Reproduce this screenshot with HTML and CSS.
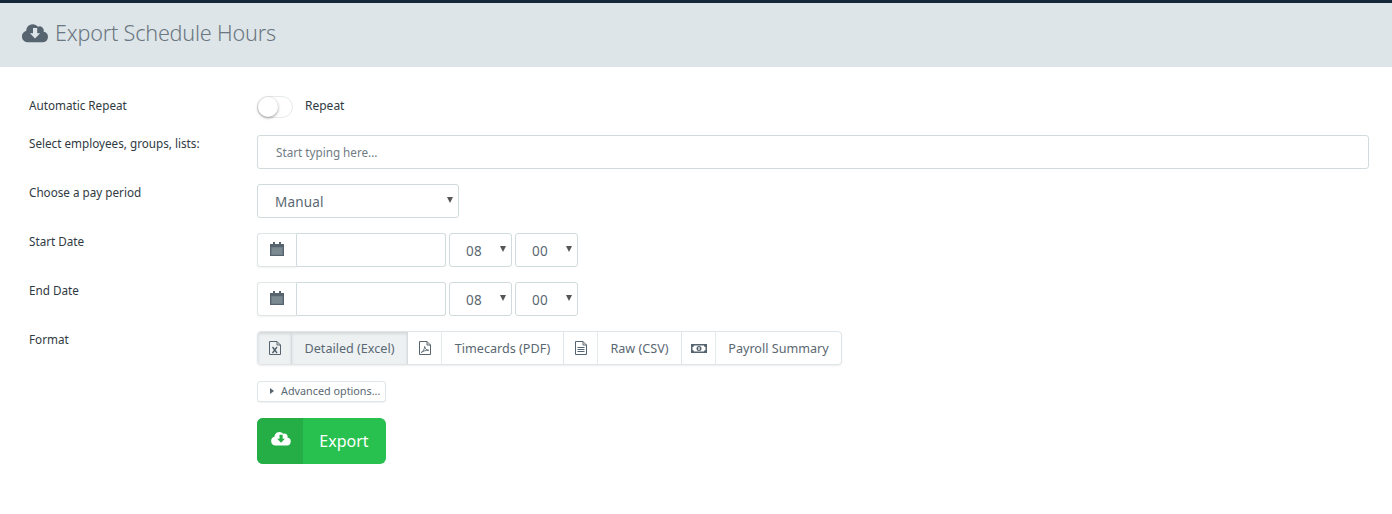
FILE: index.html
```html
<!DOCTYPE html>
<html lang="en">
<head>
<meta charset="utf-8">
<title>Export Schedule Hours</title>
<link rel="stylesheet" href="styles.css">
</head>
<body>
<header class="page-header">
  <svg class="header-icon" viewBox="0 0 26 20" aria-hidden="true"><path fill="#56646f" d="M21.6 8.8A4.2 4.2 0 0 0 16 3.7 6.6 6.6 0 0 0 4.300 7.100v.6A5.900 5.900 0 0 0 6 19.300h15a5.300 5.300 0 0 0 .6-10.500z"/><path fill="#dee5e8" d="M11 5h4.200v5.200h3L13 15.500 7.900 10.200H11z"/></svg>
  <h1 class="page-title">Export Schedule Hours</h1>
</header>
<main class="form">
  <div class="label label-toggle">Automatic Repeat</div>
  <div class="toggle-row"><span class="toggle"><span class="knob"></span></span><span class="toggle-text">Repeat</span></div>

  <label class="label">Select employees, groups, lists:</label>
  <div class="control"><input class="text-input wide" placeholder="Start typing here..."></div>

  <label class="label">Choose a pay period</label>
  <div class="control"><span class="select-wrap period"><select class="select"><option>Manual</option></select></span></div>

  <label class="label">Start Date</label>
  <div class="control date-row">
    <span class="date-group"><span class="addon"><svg class="cal" viewBox="0 0 14 14" aria-hidden="true"><path fill="#56646f" d="M3 0h2v2h4V0h2v2h3v12H0V2h3z"/><path fill="none" stroke="#aeb8be" stroke-width=".5" d="M1 6h12M1 8h12M1 10h12M1 12h12M3 5.500v7M5 5.500v7M7 5.500v7M9 5.500v7M11 5.500v7"/></svg></span><input class="date-input"></span>
    <span class="select-wrap time"><select class="select"><option>08</option></select></span>
    <span class="select-wrap time"><select class="select"><option>00</option></select></span>
  </div>

  <label class="label">End Date</label>
  <div class="control date-row">
    <span class="date-group"><span class="addon"><svg class="cal" viewBox="0 0 14 14" aria-hidden="true"><path fill="#56646f" d="M3 0h2v2h4V0h2v2h3v12H0V2h3z"/><path fill="none" stroke="#aeb8be" stroke-width=".5" d="M1 6h12M1 8h12M1 10h12M1 12h12M3 5.500v7M5 5.500v7M7 5.500v7M9 5.500v7M11 5.500v7"/></svg></span><input class="date-input"></span>
    <span class="select-wrap time"><select class="select"><option>08</option></select></span>
    <span class="select-wrap time"><select class="select"><option>00</option></select></span>
  </div>

  <div class="label">Format</div>
  <div class="control">
    <div class="formats">
      <span class="fmt-icon active"><svg class="doc" viewBox="0 0 12 14" aria-hidden="true"><path fill="none" stroke="#56646f" d="M.5.500h7.500l3.500 3.500v9.500H.5zM8 .5V4h3.500"/><path fill="none" stroke="#4c5a65" stroke-width="1.300" d="M3.500 6l4.500 6M8 6l-4.500 6"/></svg></span>
      <span class="fmt-text active w-excel">Detailed (Excel)</span>
      <span class="fmt-icon"><svg class="doc" viewBox="0 0 12 14" aria-hidden="true"><path fill="none" stroke="#56646f" d="M.5.500h7.500l3.500 3.500v9.500H.5zM8 .5V4h3.500"/><path fill="none" stroke="#56646f" stroke-width=".9" d="M2.200 11.500c2-1 3.300-3.500 3.500-6 .4 2.500 1.500 3.500 4 3.700-2.800.1-5.500.8-7.500 2.300z"/></svg></span>
      <span class="fmt-text w-pdf">Timecards (PDF)</span>
      <span class="fmt-icon"><svg class="doc" viewBox="0 0 12 14" aria-hidden="true"><path fill="none" stroke="#56646f" d="M.5.500h7.500l3.500 3.500v9.500H.5zM8 .5V4h3.500M2.500 6.500h7M2.500 8.500h7M2.500 10.500h7"/></svg></span>
      <span class="fmt-text w-csv">Raw (CSV)</span>
      <span class="fmt-icon"><svg class="money" viewBox="0 0 16 9" aria-hidden="true"><path fill="#56646f" fill-rule="evenodd" d="M0 0h16v9H0zM3 1.500A1.500 1.500 0 0 1 1.500 3v3A1.500 1.500 0 0 1 3 7.500h10A1.500 1.500 0 0 1 14.500 6V3A1.500 1.500 0 0 1 13 1.500z"/><circle cx="8" cy="4.500" r="2.500" fill="#56646f"/><path fill="#fff" d="M7.400 3h1.200v3H7.400z"/></svg></span>
      <span class="fmt-text w-pay">Payroll Summary</span>
    </div>
  </div>

  <div class="actions">
    <button class="advanced" type="button"><span class="caret"></span>Advanced options...</button>
    <button class="export" type="button"><span class="export-icon"><svg class="export-svg" viewBox="0 0 26 20" aria-hidden="true"><path fill="#fff" d="M21.600 8.800A4.200 4.200 0 0 0 16 3.700 6.600 6.600 0 0 0 4.300 7.100v.6A5.900 5.900 0 0 0 6 19.300h15a5.300 5.300 0 0 0 .6-10.500z"/><path fill="#25ad46" d="M11 5h4.200v5.200h3L13 15.500 7.900 10.200H11z"/></svg></span><span class="export-text">Export</span></button>
  </div>
</main>
</body>
</html>
```
FILE: styles.css
```css
* { box-sizing: border-box; }
html, body { margin: 0; padding: 0; background: #fff; }
body {
  font-family: "Noto Sans", "Liberation Sans", sans-serif;
  font-size: 12px;
  color: #2f3a42;
}
.page-header {
  height: 67px;
  background: #dee5e8;
  border-top: 3px solid #14283a;
  display: flex;
  align-items: center;
  gap: 7px;
  padding: 0 0 6px 22px;
}
.header-icon { width: 26px; height: 20px; margin-top: 2px; }
.page-title {
  margin: 0;
  font-family: "Noto Sans", sans-serif;
  font-weight: 300;
  font-size: 21.600px;
  color: #6a7680;
  letter-spacing: -0.2px;
}
.form {
  display: grid;
  grid-template-columns: 228px 1fr;
  grid-auto-rows: min-content;
  row-gap: 15px;
  padding: 29px 23px 0 29px;
}
.label { font-size: 11.700px; line-height: 16px; color: #2f3a42; }
.label-toggle { padding-top: 1px; }
.toggle-row { display: flex; align-items: center; gap: 12px; height: 22px; margin-bottom: 2px; }
.toggle {
  width: 36px; height: 22px;
  border: 1px solid #e6eaec;
  border-radius: 11px;
  display: block;
  background: #fff;
}
.knob {
  display: block; width: 20px; height: 20px; border-radius: 50%;
  background: #fff; box-shadow: 0 1px 3px rgba(0,0,0,.4);
}
.toggle-text { font-size: 12px; color: #2f3a42; padding-bottom: 4px; }
.control { display: flex; align-items: flex-start; }
.text-input, .date-input, .select {
  font-family: inherit;
  border: 1px solid #cfdbdc;
  background: #fff;
  outline: none;
  height: 34px;
  border-radius: 3px;
  font-size: 13.500px;
  color: #5a6872;
}
.wide { width: 100%; padding: 0 18px; font-size: 11.700px; }
.wide::placeholder { color: #6f7b84; opacity: 1; }
.select-wrap { position: relative; display: block; }
.select-wrap::after {
  content: "";
  position: absolute;
  top: 13px; right: 6px;
  border-left: 3.500px solid transparent;
  border-right: 3.500px solid transparent;
  border-top: 6px solid #555;
}
.select {
  appearance: none;
  -webkit-appearance: none;
  width: 100%;
  padding: 2px 16px 0 16px;
  letter-spacing: .2px;
}
.period .select { padding-left: 17px; }
.period { width: 202px; }
.time { width: 63px; }
.date-row { gap: 3px; }
.date-group { display: flex; width: 189px; border-radius: 3px; }
.addon {
  width: 40px; height: 34px;
  border: 1px solid #e0e6e8;
  border-right: 1px solid #cfdbdc;
  border-radius: 3px 0 0 3px;
  display: flex; align-items: center; justify-content: center;
  padding-bottom: 3px;
  box-shadow: 0 1px 2px rgba(0,0,0,.06);
}
.cal { width: 14px; height: 14px; }
.date-input { flex: 1; min-width: 0; border-left: 0; border-radius: 0 3px 3px 0; }
.formats {
  display: flex;
  height: 34px;
  border: 1px solid #dfe5e8;
  border-radius: 4px;
  box-shadow: 0 1px 2px rgba(0,0,0,.08);
  background: #fff;
  font-size: 12.600px;
  color: #5a6872;
  overflow: hidden;
}
.fmt-icon {
  width: 34px;
  display: flex; align-items: center; justify-content: center;
  border-right: 1px solid #e6ebed;
}
.fmt-text {
  display: flex; align-items: center; justify-content: center;
  border-right: 1px solid #dfe5e8;
  white-space: nowrap;
}
.w-excel { width: 116px; }
.w-pdf { width: 122px; }
.w-csv { width: 84px; }
.w-pay { width: 125px; border-right: 0; }
.active { background: #edf1f2; box-shadow: inset 0 2px 3px rgba(0,0,0,.1); border-right-color: #d5dcdf; }
.doc { width: 12px; height: 14px; }
.money { width: 16px; height: 9px; }
.actions { grid-column: 2; display: flex; flex-direction: column; align-items: flex-start; gap: 16px; margin-top: 1px; }
.advanced {
  font-family: inherit;
  display: flex; align-items: center;
  width: 129px; height: 21px;
  padding: 0 0 2px 12px;
  border: 1px solid #dfe5e8;
  border-radius: 3px;
  background: #fff;
  font-size: 10.800px;
  color: #5a6872;
  box-shadow: 0 1px 1px rgba(0,0,0,.06);
  white-space: nowrap;
}
.caret {
  border-top: 3.500px solid transparent;
  border-bottom: 3.500px solid transparent;
  border-left: 4px solid #56646f;
  margin-right: 7px;
}
.export {
  font-family: inherit;
  display: flex;
  width: 129px; height: 46px;
  padding: 0;
  border: 0;
  border-radius: 6px;
  overflow: hidden;
  background: #28c14f;
  color: #fff;
}
.export-icon { width: 46px; height: 46px; background: #25ad46; display: flex; align-items: center; justify-content: center; padding: 0 0 6px 2px; }
.export-svg { width: 20px; height: 15px; }
.export-text { flex: 1; font-size: 16px; line-height: 46px; text-align: center; padding-right: 1px; }
```
